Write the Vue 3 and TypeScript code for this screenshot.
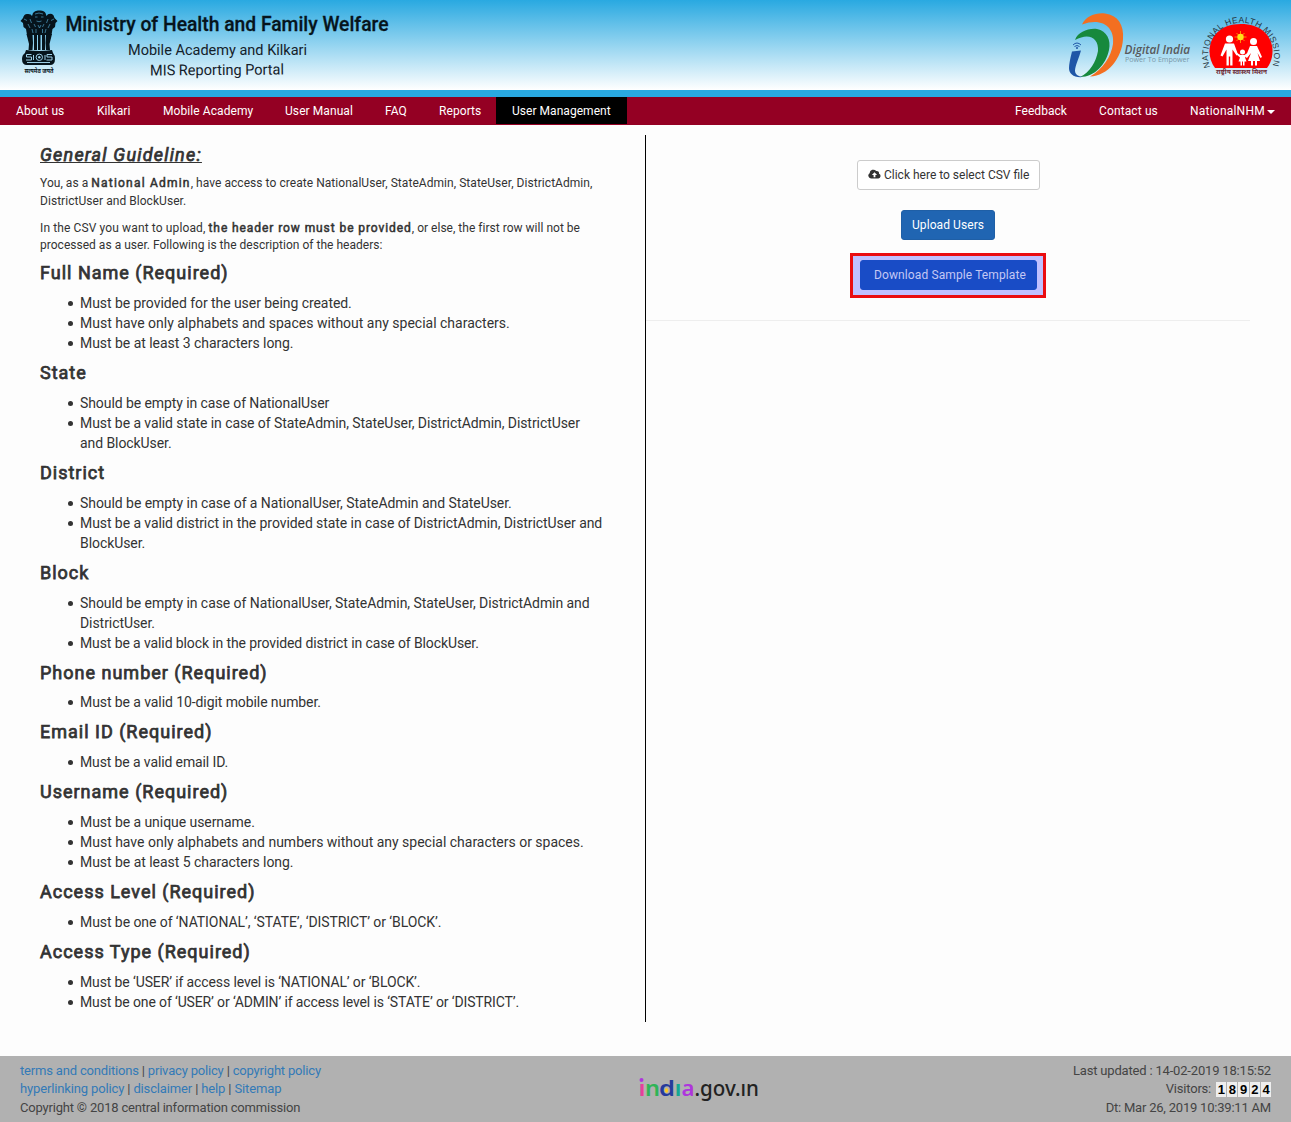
<script setup lang="ts">
interface Item {
  text: string
  track: number
}
interface Section {
  title: string
  items: Item[]
}
interface NavItem {
  label: string
  width: number
}

const nav: NavItem[] = [
  { label: 'About us', width: 81 },
  { label: 'Kilkari', width: 66 },
  { label: 'Mobile Academy', width: 122 },
  { label: 'User Manual', width: 100 },
  { label: 'FAQ', width: 54 },
  { label: 'Reports', width: 73 },
  { label: 'User Management', width: 131 },
]
const active = 'User Management'

const sections: Section[] = [
  {
    title: 'Full Name (Required)',
    items: [
      { text: 'Must be provided for the user being created.', track: -0.06 },
      { text: 'Must have only alphabets and spaces without any special characters.', track: 0 },
      { text: 'Must be at least 3 characters long.', track: -0.04 },
    ],
  },
  {
    title: 'State',
    items: [
      { text: 'Should be empty in case of NationalUser', track: -0.08 },
      { text: 'Must be a valid state in case of StateAdmin, StateUser, DistrictAdmin, DistrictUser and BlockUser.', track: -0.075 },
    ],
  },
  {
    title: 'District',
    items: [
      { text: 'Should be empty in case of a NationalUser, StateAdmin and StateUser.', track: -0.06 },
      { text: 'Must be a valid district in the provided state in case of DistrictAdmin, DistrictUser and BlockUser.', track: -0.075 },
    ],
  },
  {
    title: 'Block',
    items: [
      { text: 'Should be empty in case of NationalUser, StateAdmin, StateUser, DistrictAdmin and DistrictUser.', track: -0.065 },
      { text: 'Must be a valid block in the provided district in case of BlockUser.', track: -0.11 },
    ],
  },
  { title: 'Phone number (Required)', items: [{ text: 'Must be a valid 10-digit mobile number.', track: -0.085 }] },
  { title: 'Email ID (Required)', items: [{ text: 'Must be a valid email ID.', track: -0.12 }] },
  {
    title: 'Username (Required)',
    items: [
      { text: 'Must be a unique username.', track: -0.06 },
      { text: 'Must have only alphabets and numbers without any special characters or spaces.', track: -0.01 },
      { text: 'Must be at least 5 characters long.', track: -0.04 },
    ],
  },
  { title: 'Access Level (Required)', items: [{ text: 'Must be one of ‘NATIONAL’, ‘STATE’, ‘DISTRICT’ or ‘BLOCK’.', track: -0.07 }] },
  {
    title: 'Access Type (Required)',
    items: [
      { text: 'Must be ‘USER’ if access level is ‘NATIONAL’ or ‘BLOCK’.', track: -0.12 },
      { text: 'Must be one of ‘USER’ or ‘ADMIN’ if access level is ‘STATE’ or ‘DISTRICT’.', track: -0.13 },
    ],
  },
]

const visitors: string[] = ['1', '8', '9', '2', '4']
</script>

<template>
  <div class="page">
    <header class="banner">
      <svg class="brand" width="400" height="90" viewBox="0 0 400 90">
        <g fill="#06141c">
          <path d="M33 13Q35 10 39 10.500Q44 10 45.500 13L46.500 16Q48 13 52 14Q54 15 54.500 18L57.500 21 55.500 23 55 27 52.500 29 51.500 35H27L26 29 23.500 27 23 23 20.500 21 23 18Q24 14 27 14Q31 13.500 32 16Z" />
          <path d="M26.500 34h6l.5 9-.5 7h-4l.5-6zM34 34h3v16h-3zM38 34h2.500v16H38zM42 34h3v16h-3zM46 34h6l-2.500 10 .5 6h-4l-.5-7z" />
          <path d="M26 50q13 2 26 0l1 3q2 2 2 6 0 6-5 6H27q-5 0-5-6 0-4 3-6z" />
        </g>
        <g stroke="#4f9fc6" fill="none" stroke-width=".7">
          <path d="M35 14q4-2 8 0M35 17h2.500M41 17h2.500M36.500 21q2.500 1.500 5 0M24 19l3 1.500M51 20.500l3-1.500M34 24l1.500 3M44 24l-1.500 3M38 25l1.500 3 1.500-3M28 24l2 4M50 24l-2 4M30 19l1.500 4M48 19l-1.500 4M36 29v4M42.500 29v4M32 29l1 4M46 29l-1 4" />
          <path stroke="#9dcfe6" stroke-width="1" d="M31.500 54.500h-5v2.500h5v3h-5.500M52 54.500h-5v2.500h5v3h-5.500M33.500 55v5M45 55v5M27 62.500h23" />
          <circle cx="39.300" cy="57.300" r="3.200" stroke="#9dcfe6" stroke-width="1" />
        </g>
        <circle cx="39.300" cy="57.300" r="1.200" fill="#9dcfe6" />
        <text x="24.500" y="72.800" class="motto" textLength="29" lengthAdjust="spacingAndGlyphs">सत्यमेव जयते</text>
        <text x="65.500" y="30.500" class="title" textLength="323" lengthAdjust="spacingAndGlyphs">Ministry of Health and Family Welfare</text>
        <text x="128" y="54.500" class="subtitle" textLength="179" lengthAdjust="spacingAndGlyphs">Mobile Academy and Kilkari</text>
        <text x="150" y="75" class="subtitle" textLength="134" lengthAdjust="spacingAndGlyphs" transform="rotate(-.4 217 70)">MIS Reporting Portal</text>
      </svg>
      <svg class="partners" width="231" height="90" viewBox="1060 0 231 90">
        <path fill="#f36f21" d="M1082 24.500C1086 16 1096 12.500 1105 13.500C1118 15 1124 25 1123 39C1122 58 1108 76 1090 76.500C1103 69 1111 57 1113 44C1115 27 1102 17 1082 24.500Z" />
        <path fill="#17893d" d="M1075 40C1078 32 1088 28 1097 29C1107 31 1111 40 1109 50C1106 64 1095 77 1080 77C1090 72 1096 62 1098 51C1099 38 1089 32 1075 40Z" />
        <path fill="#1f56a7" d="M1072 51.500L1081 50.500C1079 58 1075 66 1075 71Q1075 76 1083 77C1074 78 1069 74 1069 68Q1069 63 1072 51.500Z" />
        <g fill="none" stroke="#1f56a7" stroke-width="1">
          <path d="M1073 45q4-4 8 0M1074.500 46.500q2.500-2 5 0" />
          <circle cx="1077" cy="48" r=".7" />
        </g>
        <text x="1124.500" y="53.500" class="digital" textLength="65.500" lengthAdjust="spacingAndGlyphs">Digital India</text>
        <text x="1125" y="62" class="power" textLength="64.500" lengthAdjust="spacingAndGlyphs">Power To Empower</text>
        <path fill="#f00" d="M1215 68C1203 52 1210 24 1241 24C1272 24 1279 52 1267 68Z" />
        <path id="mission-arc" fill="none" d="M1210 67A33 33 0 1 1 1272 67" />
        <text class="mission"><textPath href="#mission-arc" textLength="125">NATIONAL HEALTH MISSION</textPath></text>
        <g fill="#fff">
          <circle cx="1229.500" cy="39" r="3.600" />
          <circle cx="1253.500" cy="41.500" r="3.500" />
          <circle cx="1242.500" cy="52" r="2.500" />
          <path d="M1225 43.500h9l4 11-1.500 1-4-6v16h-2.300v-9h-1.400v9h-2.300v-16l-4 7-2-1z" />
          <path d="M1250 46h7l5 11-1.500 1-3-5 2.500 8h-3v4.500h-2V61h-2v4.500h-2V61h-3l3-8-4 5-1.500-1z" />
          <path d="M1240.500 55h4l3-2 .5 1.500-3 3 1.500 4h-2v4h-1.500v-4h-1v4h-1.500v-4h-2l1.500-4-3.500-3 .5-1.500z" />
        </g>
        <path stroke="#ff8a00" stroke-width="1" d="M1240.500 31v12M1234.500 37h12M1236.500 33l8 8M1244.500 33l-8 8" />
        <circle cx="1240.500" cy="37" r="3.200" fill="#ffe11a" />
        <text x="1216" y="74" class="hindi" textLength="51" lengthAdjust="spacingAndGlyphs">राष्ट्रीय स्वास्थ्य मिशन</text>
      </svg>
    </header>

    <nav class="menu">
      <a v-for="item in nav" :key="item.label" :class="{ on: item.label === active }" :style="{ width: item.width + 'px' }">{{ item.label }}</a>
      <span class="grow"></span>
      <a class="feedback">Feedback</a>
      <a class="contact">Contact us</a>
      <a class="user">NationalNHM<i class="caret"></i></a>
    </nav>

    <main class="content">
      <section class="guide">
        <h4 class="general">General Guideline:</h4>
        <p class="p1">You, as a <b>National Admin</b>, have access to create NationalUser, StateAdmin, StateUser, DistrictAdmin, DistrictUser and BlockUser.</p>
        <p class="p2"><span>In the CSV you want to upload, </span><b>the header row must be provided</b>, or else, the first row will not be processed as a user. Following is the description of the headers:</p>
        <template v-for="s in sections" :key="s.title">
          <h4>{{ s.title }}</h4>
          <ul>
            <li v-for="t in s.items" :key="t.text" :style="{ letterSpacing: t.track + 'px' }">{{ t.text }}</li>
          </ul>
        </template>
      </section>
      <section class="upload">
        <button class="btn select">
          <svg width="13" height="10" viewBox="0 0 13 10">
            <path fill="#333" d="M3 9.500A2.900 2.900 0 0 1 1.600 4.200 3.700 3.700 0 0 1 8.200 2.100 2.200 2.200 0 0 1 11 4.700 2.500 2.500 0 0 1 10.400 9.500Z" />
            <path fill="#fff" d="M6.500 3.200L9.100 6H7.400v2.300H5.600V6H3.900Z" />
          </svg>
          Click here to select CSV file
        </button>
        <button class="btn primary">Upload Users</button>
        <div class="mark"><button class="btn sample">Download Sample Template</button></div>
        <hr />
      </section>
    </main>

    <footer class="foot">
      <div class="links">
        <div class="l1"><a>terms and conditions</a> | <a>privacy policy</a> | <a>copyright policy</a></div>
        <div class="l2"><a>hyperlinking policy</a> | <a>disclaimer</a> | <a>help</a> | <a>Sitemap</a></div>
        <div class="l3">Copyright © 2018 central information commission</div>
      </div>
      <svg class="india" width="130" height="36" viewBox="0 0 130 36">
        <g class="word">
          <text x="2.500" y="27" fill="#e5409b" textLength="7" lengthAdjust="spacingAndGlyphs">ı</text>
          <text x="9" y="27" fill="#2fb457" textLength="15" lengthAdjust="spacingAndGlyphs">n</text>
          <text x="23" y="27" fill="#263a9b" textLength="16" lengthAdjust="spacingAndGlyphs">d</text>
          <text x="38.500" y="27" fill="#14a892" textLength="7" lengthAdjust="spacingAndGlyphs">ı</text>
          <text x="45.500" y="27" fill="#ae35dd" textLength="13" lengthAdjust="spacingAndGlyphs">a</text>
        </g>
        <circle cx="5.500" cy="11" r="2" fill="#ae35dd" />
        <ellipse cx="30.500" cy="21.500" rx="1.600" ry="2.200" fill="#ffc91f" />
        <text x="58.500" y="27" class="gov" textLength="64.500" lengthAdjust="spacingAndGlyphs">.gov.ın</text>
      </svg>
      <div class="stats">
        <div class="s1">Last updated : 14-02-2019 18:15:52</div>
        <div class="visit">Visitors: <span class="digits"><i v-for="(d, i) in visitors" :key="i">{{ d }}</i></span></div>
        <div class="s3">Dt: Mar 26, 2019 10:39:11 AM</div>
      </div>
    </footer>
  </div>
</template>

<style>
body {
  margin: 0;
  background: #fdfdfd;
}
</style>

<style scoped>
.page {
  width: 1291px;
  height: 1122px;
  display: flex;
  flex-direction: column;
  font: 14px/20px Roboto, sans-serif;
  color: #333;
  box-sizing: border-box;
}
.banner {
  height: 90px;
  flex: none;
  display: flex;
  justify-content: space-between;
  border-bottom: 7px solid #29a9e1;
  background: linear-gradient(#29a9e1, #fff);
}
.title { font: 500 20px Roboto, sans-serif; fill: #06141c; stroke: #06141c; stroke-width: .3px; }
.subtitle { font: 400 15px Roboto, sans-serif; fill: #14212a; }
.motto { font: 700 6px 'Noto Sans', sans-serif; fill: #06141c; }
.digital { font: italic 600 12px 'Open Sans', sans-serif; fill: #58595b; }
.power { font: 400 6.500px 'Open Sans', sans-serif; fill: #7b98a8; }
.mission { font: 400 8.500px 'Liberation Sans', sans-serif; fill: #26363f; }
.hindi { font: 700 6px 'Noto Sans', sans-serif; fill: #6b2a35; }
.menu {
  height: 28px;
  flex: none;
  display: flex;
  background: #940023;
}
.menu a {
  box-sizing: border-box;
  flex: none;
  padding-left: 16px;
  color: #fff;
  font-size: 12px;
  line-height: 28px;
  letter-spacing: .08px;
  white-space: nowrap;
}
.menu a.on {
  background: #000;
  height: 27px;
  letter-spacing: .04px;
}
.menu .feedback { width: 84px; letter-spacing: .04px; }
.menu .contact { width: 91px; letter-spacing: .12px; }
.menu .user { width: 117px; letter-spacing: .22px; }
.grow { flex: 1; }
.caret {
  display: inline-block;
  margin-left: 2px;
  vertical-align: middle;
  border-top: 4px solid #fff;
  border-left: 4px solid transparent;
  border-right: 4px solid transparent;
}
.content {
  height: 887px;
  flex: none;
  margin: 10px 20px 0;
  display: flex;
}
.guide {
  width: 626px;
  box-sizing: border-box;
  padding: 0 40px 0 20px;
  border-right: 1px solid #000;
  display: flow-root;
}
h4 {
  margin: 10px 0;
  font-size: 18px;
  line-height: 19.8px;
  font-weight: 400;
  letter-spacing: 1px;
  -webkit-text-stroke: .75px #333;
}
.general {
  margin-bottom: 10.600px;
  font-style: italic;
  letter-spacing: 1.200px;
  text-decoration: underline;
}
p {
  margin: 0 0 10px;
  font-size: 12px;
  line-height: 17.14px;
}
.p1 { letter-spacing: .05px; }
.p2 { letter-spacing: .02px; margin-bottom: 0; padding-bottom: 0; }
.p2 + h4 { margin-top: 9.400px; }
.p2 span { letter-spacing: .12px; }
b {
  font-weight: 400;
  -webkit-text-stroke: .5px #333;
}
.p1 b { letter-spacing: 1.200px; }
.p2 b { letter-spacing: .920px; }
ul {
  margin: 0 0 10px;
  padding-left: 40px;
  list-style: none;
}
li::before {
  content: '';
  display: inline-block;
  width: 5px;
  height: 5px;
  margin: 0 7.500px 2px -12.500px;
  border-radius: 50%;
  background: #333;
}
.upload {
  flex: 1;
  margin-right: 20px;
  display: flex;
  flex-direction: column;
  align-items: center;
  padding-top: 25px;
}
.btn {
  height: 30px;
  flex: none;
  box-sizing: border-box;
  display: block;
  padding: 0 10px;
  font: 12px/18px Roboto, sans-serif;
  border: 1px solid #ccc;
  border-radius: 3px;
  white-space: nowrap;
}
.select {
  background: #fff;
  color: #333;
  width: 183px;
}
.primary {
  width: 94px;
  margin: 20px 1px 0 0;
  background: #2065b2;
  border-color: #1f5fa6;
  color: #fff;
  letter-spacing: .08px;
}
.mark {
  margin: 13px 1px 0 0;
  width: 196px;
  height: 45px;
  box-sizing: border-box;
  border: 3px solid #ea0c10;
  background: #c0c0ff;
  padding: 4px 0 0 7px;
}
.sample {
  width: 177px;
  padding: 0 0 0 3px;
  background: #194cc6;
  border-color: #194cc6;
  color: #c4c8f4;
  letter-spacing: .11px;
}
hr {
  width: 604px;
  margin: 22px 1px 0 0;
  border: 0;
  border-top: 1px solid #eee;
}
.foot {
  height: 66px;
  flex: none;
  box-sizing: border-box;
  margin-top: auto;
  padding: 5.500px 20px 0;
  display: flex;
  background: #b1b1b1;
  color: #444;
  font-size: 13px;
  line-height: 18.570px;
}
.links { width: 400px; white-space: nowrap; }
.l1 { letter-spacing: -.180px; }
.l2 { letter-spacing: -.140px; }
.l3 { letter-spacing: -.190px; }
.stats { flex: 1; text-align: right; white-space: nowrap; }
.s1 { letter-spacing: -.180px; }
.s3 { letter-spacing: -.210px; }
.links a { color: #337ab7; }
.india { flex: none; margin: 7px 0 0 216px; }
.word { font: 600 22px 'Noto Sans', sans-serif; }
.gov { font: 500 22px 'Noto Sans', sans-serif; fill: #222; }
.visit { display: flex; justify-content: flex-end; gap: 4px; letter-spacing: -.2px; }
.digits { display: flex; padding-top: 2px; height: 15px; }
.digits i {
  width: 10.200px;
  height: 15px;
  margin-left: 1px;
  background: #eee;
  color: #000;
  font: bold 13px/15px 'Liberation Sans', sans-serif;
  text-align: center;
}
</style>
